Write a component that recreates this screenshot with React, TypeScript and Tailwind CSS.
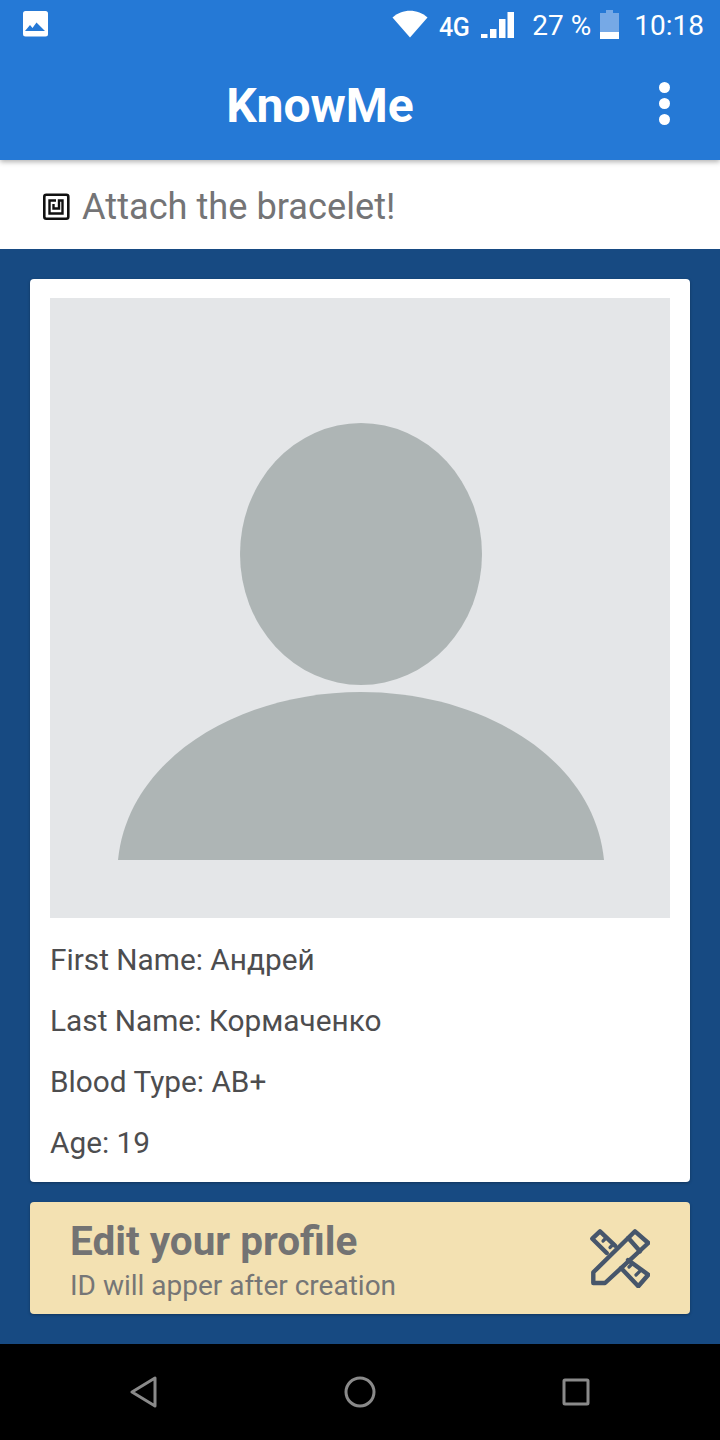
import React from "react";

const font = "font-['Roboto',sans-serif]";

function ImageIcon() {
  return (
    <svg width="28" height="28" viewBox="0 0 28 28">
      <rect x="2" y="1" width="25" height="25.5" rx="2.5" fill="#fff" />
      <path d="M4 21 L9 15 L11.5 18 L15.5 12.5 L24 21 Z" fill="#2579d6" />
    </svg>
  );
}

function Wifi() {
  return (
    <svg width="36" height="28" viewBox="0 0 36 28">
      <path d="M0.5 7.5 C10 -1.5 26 -1.5 35.5 7.5 L18 27.5 Z" fill="#fff" />
    </svg>
  );
}

function Signal() {
  return (
    <svg width="33" height="26" viewBox="0 0 33 26">
      <rect x="0" y="22" width="6.5" height="4" fill="#fff" />
      <rect x="9" y="17" width="6.5" height="9" fill="#fff" />
      <rect x="18" y="7" width="6.5" height="19" fill="#fff" />
      <rect x="26.5" y="0" width="6.5" height="26" fill="#fff" />
    </svg>
  );
}

function Battery() {
  return (
    <svg width="19" height="29" viewBox="0 0 19 29">
      <rect x="6" y="0" width="7" height="3" fill="#76a9e6" />
      <rect x="0" y="3" width="19" height="26" fill="#76a9e6" />
      <rect x="0" y="22" width="19" height="7" fill="#fff" />
    </svg>
  );
}

function NfcIcon() {
  return (
    <svg width="28" height="28" viewBox="0 0 28 28" fill="none" stroke="#111" strokeWidth="2.6">
      <rect x="2.3" y="1.8" width="24" height="24" rx="2" />
      <path d="M14 7.5 H7.5 V20.5 H20.5 V7.5 H17 V15.5 H11.5 V11" strokeWidth="2.4" />
    </svg>
  );
}

function Silhouette() {
  return (
    <svg width="620" height="620" viewBox="0 0 620 620" className="block">
      <ellipse cx="311" cy="256" rx="121" ry="131" fill="#aeb5b5" />
      <path d="M68 562 C78 460 190 394 311 394 C432 394 544 460 554 562 Z" fill="#aeb5b5" />
    </svg>
  );
}

function Tools() {
  return (
    <svg width="60" height="60" viewBox="0 0 60 60" fill="none" stroke="#47566b" strokeWidth="4.4" strokeLinejoin="round" strokeLinecap="round">
      <path d="M16.7 25 L2.3 10.7 L10 3.3 L25 17.7" />
      <path d="M13 13 L16.5 9.5 M20 19.5 L23.5 16" strokeWidth="3.2" />
      <path d="M38 32 L58.3 46.7 L48.3 58.3 L31 40" />
      <path d="M39 39 L42.5 35.5 M46 47 L50 43" strokeWidth="3.2" />
      <path d="M3.3 44.3 L45 3.3 L58.3 15 L15 55 H3.3 Z" />
      <path d="M38.3 10 L50 23.3" />
    </svg>
  );
}

function Row({ children }: { children: React.ReactNode }) {
  return <div className="h-[61px] flex items-center text-[29.8px] leading-none text-[#4d4d4f]">{children}</div>;
}

export default function App() {
  return (
    <div className={`${font} w-[720px] h-[1440px] flex flex-col overflow-hidden bg-[#174a82]`}>
      <header className="relative z-10 h-[160px] shrink-0 flex flex-col bg-[#2579d6] shadow-[0_2px_5px_rgba(0,0,0,0.3)] text-white">
        <div className="h-[48px] flex items-center pl-[21px] pr-[16px]">
          <ImageIcon />
          <div className="ml-auto flex items-center">
            <Wifi />
            <span className="ml-[11px] mt-[7px] text-[25px] leading-none font-medium tracking-[-0.5px]">4G</span>
            <span className="ml-[12px] mt-[2px]"><Signal /></span>
            <span className="ml-[18px] mt-[3px] text-[28px] leading-none">27 %</span>
            <span className="ml-[9px]"><Battery /></span>
            <span className="ml-[15px] mt-[3px] text-[28px] leading-none">10:18</span>
          </div>
        </div>
        <div className="flex-1 flex items-center justify-center relative pr-[80px] pt-[3px]">
          <h1 className="text-[48px] font-bold leading-none">KnowMe</h1>
          <div className="absolute right-[50px] top-[34px] flex flex-col gap-[5px]">
            <span className="w-[11px] h-[11px] rounded-full bg-white" />
            <span className="w-[11px] h-[11px] rounded-full bg-white" />
            <span className="w-[11px] h-[11px] rounded-full bg-white" />
          </div>
        </div>
      </header>

      <div className="h-[89px] shrink-0 bg-white flex items-center pl-[42px] pt-[4px] gap-[12px]">
        <NfcIcon />
        <span className="text-[36.2px] leading-none text-[#747476] mt-[2px]">Attach the bracelet!</span>
      </div>

      <main className="flex-1 px-[30px] pt-[30px] flex flex-col">
        <section className="h-[903px] bg-white rounded-[4px] px-[20px] pt-[19px] shadow-[0_1px_3px_rgba(0,0,0,0.3)]">
          <div className="w-[620px] h-[620px] bg-[#e4e6e8]">
            <Silhouette />
          </div>
          <div className="mt-[11px] flex flex-col">
            <Row>First Name: Андрей</Row>
            <Row>Last Name: Кормаченко</Row>
            <Row>Blood Type: AB+</Row>
            <Row>Age: 19</Row>
          </div>
        </section>
        <section className="mt-[20px] h-[112px] bg-[#f3e1b2] rounded-[4px] pl-[40px] pr-[40px] flex items-center justify-between shadow-[0_1px_3px_rgba(0,0,0,0.3)]">
          <div className="flex flex-col pt-[12px]">
            <span className="text-[40.5px] leading-[44px] font-bold text-[#737373]">Edit your profile</span>
            <span className="text-[28px] leading-[46px] text-[#767676]">ID will apper after creation</span>
          </div>
          <Tools />
        </section>
      </main>

      <nav className="h-[96px] shrink-0 bg-black flex items-center justify-center">
        <div className="w-[460px] flex items-center justify-between">
          <svg width="28" height="32" viewBox="0 0 28 32" fill="none" stroke="#8a8a8a" strokeWidth="3" strokeLinejoin="round">
            <path d="M25 2 V30 L2 16 Z" />
          </svg>
          <svg width="32" height="32" viewBox="0 0 32 32" fill="none" stroke="#8a8a8a" strokeWidth="3">
            <circle cx="16" cy="16" r="14" />
          </svg>
          <svg width="28" height="28" viewBox="0 0 28 28" fill="none" stroke="#8a8a8a" strokeWidth="3" strokeLinejoin="round">
            <rect x="2" y="2" width="24" height="24" rx="1" />
          </svg>
        </div>
      </nav>
    </div>
  );
}
